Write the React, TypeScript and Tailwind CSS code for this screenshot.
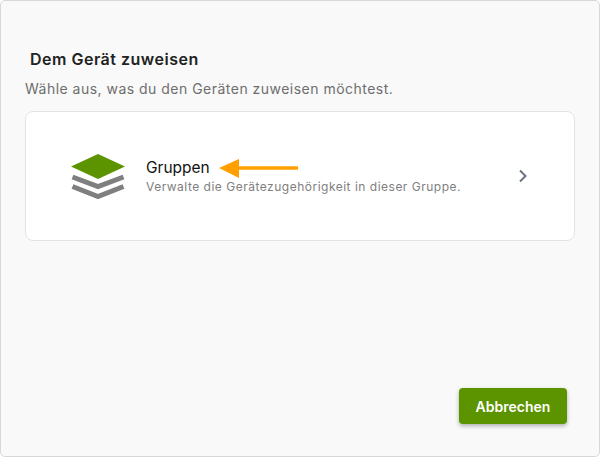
export default function App() {
  return (
    <div className="h-[457px] w-[600px] overflow-hidden rounded-[5px] border border-[#d8d8d8] bg-[#f9f9f9] font-['Inter',sans-serif]">
      <div className="flex h-full flex-col px-6 pb-[32px] pt-[48px]">
        <h2 className="pl-[5px] text-[16px] font-semibold leading-[20px] tracking-[0.5px] text-[#222]">Dem Gerät zuweisen</h2>
        <p className="mt-[10px] text-[14px] leading-[20px] tracking-[0.48px] text-[#6e6e6e]">Wähle aus, was du den Geräten zuweisen möchtest.</p>
        <div className="mt-[12px] flex h-[130px] items-center rounded-lg border border-[#e3e3e3] bg-white pl-[45px] pr-[46px]">
          <svg width="56" height="46" viewBox="0 0 56 46" fill="none" className="shrink-0">
            <path d="M1.5 24 L27 33.5 L52.5 24" stroke="#7f7f7f" strokeWidth="5" />
            <path d="M1.5 33.5 L27 43.5 L52.5 33.5" stroke="#7f7f7f" strokeWidth="5" />
            <path d="M27 1 L54 13.5 L27 26 L0 13.5 Z" fill="#5c9400" />
          </svg>
          <div className="ml-[19px] flex-1">
            <div className="flex items-center">
              <span className="text-[15.5px] leading-[20px] text-[#111]">Gruppen</span>
              <svg width="80" height="20" viewBox="0 0 80 20" className="ml-[9px]">
                <path d="M19 10 H79" stroke="#ffa000" strokeWidth="3.5" />
                <path d="M0 10 L20 1 V20 Z" fill="#ffa000" />
              </svg>
            </div>
            <p className="mt-px text-[12px] leading-[16px] tracking-[0.5px] text-[#808080]">Verwalte die Gerätezugehörigkeit in dieser Gruppe.</p>
          </div>
          <svg width="10" height="14" viewBox="0 0 10 14" fill="none" className="shrink-0">
            <path d="M2 1.5 L7.5 7 L2 12.5" stroke="#6b7280" strokeWidth="2" />
          </svg>
        </div>
        <div className="mt-auto flex justify-end pr-[8px]">
          <button className="h-[36px] w-[108px] rounded bg-[#5c9400] text-[14px] font-semibold text-white shadow-[0_2px_4px_rgba(0,0,0,0.3)]">Abbrechen</button>
        </div>
      </div>
    </div>
  );
}
